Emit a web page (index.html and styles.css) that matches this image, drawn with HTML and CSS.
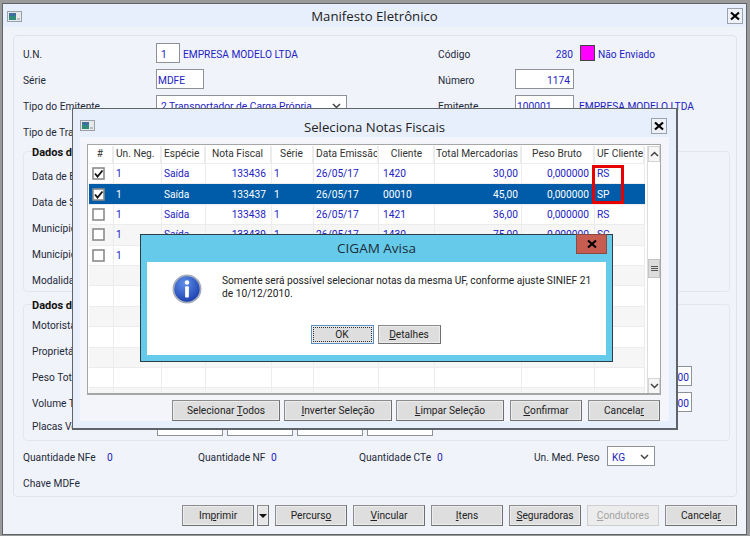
FILE: index.html
```html
<!DOCTYPE html>
<html lang="pt">
<head>
<meta charset="utf-8">
<title>Manifesto Eletrônico</title>
<link rel="stylesheet" href="styles.css">
</head>
<body>
<svg class="defs" width="0" height="0" aria-hidden="true">
  <symbol id="win" viewBox="0 0 15 11">
    <rect x="0.5" y="0.5" width="14" height="10" fill="#e8e8e8" stroke="#9aa0a8"/>
    <rect x="2" y="2" width="7" height="7" fill="#2f8a7a"/>
    <rect x="2" y="2" width="7" height="3" fill="#3f6f9f"/>
    <rect x="10" y="7" width="3" height="2" fill="#b8bcc4"/>
  </symbol>
  <symbol id="chk" viewBox="0 0 13 13">
    <rect x="1" y="1" width="11" height="11" fill="#fff" stroke="#8a8a8a" stroke-width="1.6"/>
    <path d="M3 6.5 L5.5 9.5 L10.5 3.5" fill="none" stroke="#111" stroke-width="1.8"/>
  </symbol>
  <symbol id="box" viewBox="0 0 13 13">
    <rect x="1" y="1" width="11" height="11" fill="#fff" stroke="#8a8a8a" stroke-width="1.6"/>
  </symbol>
  <symbol id="x" viewBox="0 0 12 10">
    <path d="M2 1.5 L10 8.5 M10 1.5 L2 8.5" stroke="#000" stroke-width="2.2" fill="none"/>
  </symbol>
  <symbol id="chev" viewBox="0 0 9 6">
    <path d="M1 1 L4.5 4.5 L8 1" fill="none" stroke="#444" stroke-width="1.5"/>
  </symbol>
</svg>

<main class="window">
  <header class="titlebar">
    <svg class="ticon"><use href="#win"/></svg>
    <h1 class="title">Manifesto Eletrônico</h1>
    <button class="closebtn"><svg class="xicon"><use href="#x"/></svg></button>
  </header>
  <div class="content">
    <section class="panel">
      <div class="row">
        <div class="half"><span class="lbl">U.N.</span><span class="field w24">1</span><span class="val ml3">EMPRESA MODELO LTDA</span></div>
        <div class="half"><span class="lbl2">Código</span><span class="val num">280</span><span class="swatch"></span><span class="val">Não Enviado</span></div>
      </div>
      <div class="row">
        <div class="half"><span class="lbl">Série</span><span class="field w48 tight">MDFE</span></div>
        <div class="half"><span class="lbl2">Número</span><span class="field w59 right">1174</span></div>
      </div>
      <div class="row">
        <div class="half"><span class="lbl">Tipo do Emitente</span><span class="field w191">2 Transportador de Carga Própria<svg class="chev"><use href="#chev"/></svg></span></div>
        <div class="half"><span class="lbl2">Emitente</span><span class="field w59 tight">100001</span><span class="val ml5">EMPRESA MODELO LTDA</span></div>
      </div>
      <div class="row"><div class="half"><span class="lbl">Tipo de Transportador</span></div></div>

      <section class="group g1">
        <div class="legend">Dados do Transporte</div>
        <div class="row"><span class="lbl">Data de Emissão</span></div>
        <div class="row"><span class="lbl">Data de Saída</span></div>
        <div class="row"><span class="lbl">Município Carregamento</span></div>
        <div class="row"><span class="lbl">Município Descarga</span></div>
        <div class="row"><span class="lbl">Modalidade</span></div>
      </section>

      <section class="group g2">
        <div class="legend">Dados do Veículo</div>
        <div class="row"><span class="lbl">Motorista</span></div>
        <div class="row"><span class="lbl">Proprietário</span></div>
        <div class="row spread"><span class="lbl">Peso Total</span><span class="field w23 right">000</span></div>
        <div class="row spread"><span class="lbl">Volume Total</span><span class="field w23 right">,00</span></div>
        <div class="row last"><span class="lbl lblp">Placas Veículos</span><span class="field plate"></span><span class="field plate"></span><span class="field plate"></span><span class="field plate"></span></div>
      </section>

      <div class="row qty">
        <span class="q1">Quantidade NFe</span><span class="val v1">0</span>
        <span class="q2">Quantidade NF</span><span class="val v2">0</span>
        <span class="q3">Quantidade CTe</span><span class="val v3">0</span>
        <span class="q4">Un. Med. Peso</span><span class="field w48">KG<svg class="chev"><use href="#chev"/></svg></span>
      </div>
      <div class="row"><span>Chave MDFe</span></div>
    </section>
    <footer class="actions">
      <button class="btn w72"><span>Im<u>p</u>rimir</span></button>
      <button class="btn drop"><span class="tri"></span></button>
      <button class="btn w72 gap6"><span>Percurs<u>o</u></span></button>
      <button class="btn w72"><span><u>V</u>incular</span></button>
      <button class="btn w72"><span><u>I</u>tens</span></button>
      <button class="btn w72"><span><u>S</u>eguradoras</span></button>
      <button class="btn w72 off"><span><u>C</u>ondutores</span></button>
      <button class="btn w72"><span>Cancela<u>r</u></span></button>
    </footer>
  </div>
</main>

<section class="dialog">
  <header class="titlebar dlgbar">
    <svg class="ticon"><use href="#win"/></svg>
    <h2 class="title">Seleciona Notas Fiscais</h2>
    <button class="closebtn"><svg class="xicon"><use href="#x"/></svg></button>
  </header>
  <div class="dlgbody">
    <div class="grid">
      <div class="rows">
        <div class="gr head"><span class="c">#</span><span>Un. Neg.</span><span>Espécie</span><span class="c">Nota Fiscal</span><span class="c">Série</span><span>Data Emissão</span><span class="c">Cliente</span><span class="c">Total Mercadorias</span><span class="c">Peso Bruto</span><span>UF Cliente</span></div>
        <div class="gr"><span class="c"><svg class="cb"><use href="#chk"/></svg></span><span>1</span><span>Saída</span><span class="r">133436</span><span>1</span><span>26/05/17</span><span>1420</span><span class="r">30,00</span><span class="r">0,000000</span><span>RS</span></div>
        <div class="gr sel"><span class="c"><svg class="cb"><use href="#chk"/></svg></span><span>1</span><span>Saída</span><span class="r">133437</span><span>1</span><span>26/05/17</span><span>00010</span><span class="r">45,00</span><span class="r">0,000000</span><span>SP</span></div>
        <div class="gr"><span class="c"><svg class="cb"><use href="#box"/></svg></span><span>1</span><span>Saída</span><span class="r">133438</span><span>1</span><span>26/05/17</span><span>1421</span><span class="r">36,00</span><span class="r">0,000000</span><span>RS</span></div>
        <div class="gr alt"><span class="c"><svg class="cb"><use href="#box"/></svg></span><span>1</span><span>Saída</span><span class="r">133439</span><span>1</span><span>26/05/17</span><span>1430</span><span class="r">75,00</span><span class="r">0,000000</span><span>SC</span></div>
        <div class="gr"><span class="c"><svg class="cb"><use href="#box"/></svg></span><span>1</span><span></span><span></span><span></span><span></span><span></span><span></span><span></span><span></span></div>
        <div class="gr alt"><i></i><i></i><i></i><i></i><i></i><i></i><i></i><i></i><i></i><i></i></div>
        <div class="gr"><i></i><i></i><i></i><i></i><i></i><i></i><i></i><i></i><i></i><i></i></div>
        <div class="gr alt"><i></i><i></i><i></i><i></i><i></i><i></i><i></i><i></i><i></i><i></i></div>
        <div class="gr"><i></i><i></i><i></i><i></i><i></i><i></i><i></i><i></i><i></i><i></i></div>
        <div class="gr alt"><i></i><i></i><i></i><i></i><i></i><i></i><i></i><i></i><i></i><i></i></div>
        <div class="gr"><i></i><i></i><i></i><i></i><i></i><i></i><i></i><i></i><i></i><i></i></div>
        <div class="gr alt stub"><i></i><i></i><i></i><i></i><i></i><i></i><i></i><i></i><i></i><i></i></div>
      </div>
      <div class="scroll">
        <span class="arrow up"><svg class="chev2"><use href="#chev"/></svg></span>
        <span class="thumb"><b></b><b></b><b></b></span>
        <span class="arrow"><svg class="chev2"><use href="#chev"/></svg></span>
      </div>
      <div class="redmark"></div>
    </div>
    <div class="dlgactions">
      <button class="btn w108"><span>Selecionar <u>T</u>odos</span></button>
      <button class="btn w108"><span><u>I</u>nverter Seleção</span></button>
      <button class="btn w108"><span><u>L</u>impar Seleção</span></button>
      <button class="btn w72 gap6b"><span><u>C</u>onfirmar</span></button>
      <button class="btn w72 gap6b"><span>Cancela<u>r</u></span></button>
    </div>
  </div>
</section>

<section class="alert">
  <header class="alertbar">
    <h2 class="alerttitle">CIGAM Avisa</h2>
    <button class="alertclose"><svg class="xicon"><use href="#x"/></svg></button>
  </header>
  <div class="alertbody">
    <div class="msg">
      <svg class="info" viewBox="0 0 32 32">
        <defs>
          <radialGradient id="ig" cx="0.4" cy="0.3" r="0.8"><stop offset="0" stop-color="#5f8fe8"/><stop offset="1" stop-color="#1234a8"/></radialGradient>
        </defs>
        <circle cx="16" cy="16" r="14.5" fill="url(#ig)" stroke="#a6adb8" stroke-width="2"/>
        <circle cx="16" cy="9" r="2.4" fill="#fff"/>
        <rect x="14" y="13" width="4" height="12" rx="1" fill="#fff"/>
      </svg>
      <p class="msgtext">Somente será possível selecionar notas da mesma UF, conforme ajuste SINIEF 21 de 10/12/2010.</p>
    </div>
    <div class="alertactions">
      <button class="btn ok"><span class="focus">OK</span></button>
      <button class="btn w63"><span><u>D</u>etalhes</span></button>
    </div>
  </div>
</section>
</body>
</html>
```
FILE: styles.css
```css
* { box-sizing: border-box; }
html, body { margin: 0; padding: 0; }
body {
  position: relative;
  width: 750px; height: 536px; overflow: hidden;
  background: #9a9a9a;
  font: 10.2px/13px Roboto, "Liberation Sans", sans-serif;
  color: #1e2a38;
}
.defs { position: absolute; }
h1, h2, p { margin: 0; font-weight: normal; }
button { font: inherit; color: inherit; padding: 0; margin: 0; }

.window {
  position: absolute; left: 2px; top: 3px; width: 745px; height: 532px;
  border: 1px solid #5f6468;
  background: #f1f3fa;
  display: flex; flex-direction: column;
}
.titlebar {
  height: 23px; flex: none; background: #e8effc; padding-top: 1px;
  display: flex; align-items: center; justify-content: center;
  position: relative;
}
.ticon { position: absolute; left: 4px; top: 7px; width: 15px; height: 11px; }
.title { font: 13.2px/18px "Open Sans", sans-serif; color: #222; }
.closebtn {
  position: absolute; right: 3px; top: 4px; width: 16px; height: 16px;
  background: #eef1f7; border: 1px solid #9aa2ac;
  display: flex; align-items: center; justify-content: center;
}
.xicon { width: 12px; height: 10px; display: block; }
.content { flex: 1; display: flex; flex-direction: column; padding: 8px 9px 0 10px; }

.panel {
  height: 462px; border: 1px solid #dfe4ec; border-radius: 4px;
  padding: 4px 6px 0 9px;
}
.row { display: flex; align-items: center; height: 26px; white-space: nowrap; }
.row span:not(.swatch) { padding-top: 2px; }
.half { display: flex; align-items: center; width: 415px; flex: none; }
.half + .half { width: auto; }
.lbl { width: 133px; flex: none; }
.lbl2 { width: 77px; flex: none; }
.val { color: #2222c4; }
.ml3 { margin-left: 3px; }
.ml5 { margin-left: 5px; }
.num { width: 58px; text-align: right; }
.swatch { width: 15px; height: 16px; background: #f0f; border: 1px solid #444; margin: 0 3px 0 7px; }

.field {
  height: 20px; background: #fff; border: 1px solid #8e9296;
  color: #2222c4; padding: 0 3px 0 4px; flex: none;
  display: flex; align-items: center; position: relative;
}
.w23 { width: 23px; padding-right: 2px; overflow: hidden; }
.w24 { width: 24px; }
.w48 { width: 48px; }
.w59 { width: 59px; }
.w191 { width: 191px; }
.tight { padding-left: 1px; }
.right { justify-content: flex-end; }
.chev { position: absolute; right: 5px; top: 7px; width: 9px; height: 6px; }

.group { border: 1px solid #e2e6ee; border-radius: 4px; padding: 0 0 0 8px; }
.legend { font-weight: bold; color: #111; height: 14px; margin: -7px 0 3px; padding-top: 1px; font-size: 11px; }
.group .lbl { width: 125px; }
.g1 { margin-top: 7px; height: 141px; }
.g2 { margin-top: 12px; height: 137px; }
.g2 .legend { margin-bottom: -1px; }
.spread { justify-content: space-between; padding-right: 37px; }
.last { height: 21px; gap: 4px; }
.lblp { margin-right: -4px; }
.plate { width: 66px; height: 21px; }

.qty { margin-top: 2px; }
.q1 { width: 84px; }
.v1 { width: 91px; }
.q2 { width: 73px; }
.v2 { width: 88px; }
.q3 { width: 78px; }
.v3 { width: 97px; }
.q4 { width: 73px; }

.actions { display: flex; padding: 8px 0 0 169px; gap: 6px; }
.btn {
  height: 21px; background: #dedede; flex: none;
  border: 1px solid #8c8c8c; border-right-color: #6f6f6f; border-bottom-color: #6f6f6f;
  box-shadow: inset 0 0 0 1px #ececec;
  display: flex; align-items: center; justify-content: center; color: #222;
}
.w72 { width: 72px; }
.w108 { width: 108px; }
.w63 { width: 63px; height: 19px; }
.drop { width: 12px; margin-left: -3px; background: #e6e6e6; }
.tri { width: 0; height: 0; border: 4px solid transparent; border-top: 4px solid #111; border-bottom: 0; }
.off { color: #a4a4a4; background: #ececec; border-color: #cfcfcf; }

.dialog {
  position: absolute; left: 72px; top: 108px; width: 606px; height: 322px;
  border: 1px solid #5f6468; border-bottom-width: 2px; border-right-width: 2px;
  background: #e8effc; display: flex; flex-direction: column;
}
.dlgbar { height: 28px; padding-top: 8px; }
.dlgbar .ticon { left: 7px; top: 11px; }
.dlgbar .closebtn { right: 9px; top: 9px; }
.dlgbody { flex: 1; margin: 0 7px 7px; background: #f3f5fb; padding: 7px 0 0 7px; display: flex; flex-direction: column; }
.grid { position: relative; width: 574px; height: 251px; border: 1px solid #a6a6a6; border-bottom-width: 2px; background: #fff; display: flex; overflow: hidden; padding: 1px 0 0 1px; }
.rows { width: 556px; flex: none; }
.gr {
  display: grid;
  grid-template-columns: 25px 48px 44px 66px 42px 65px 56px 87px 73px 50px;
  height: 20.4px; align-items: stretch; color: #2222c4;
  border-bottom: 1px solid #ececec; background: #fff;
}
.gr > * { display: flex; align-items: center; padding: 0 3px 0 2px; border-right: 1px solid #ececec; overflow: hidden; white-space: nowrap; }
.gr .c { justify-content: center; }
.gr .r { justify-content: flex-end; }
.gr .r:nth-child(4), .gr .r:nth-child(9) { padding-right: 5px; }
.gr > :nth-child(7) { padding-left: 4px; }
.alt { background: #f6f6f6; }
.head { height: 18px; color: #333; background: #fff; }
.head > * { border-right: 2px solid #ececec; padding-bottom: 2px; }
.sel { background: #005ca8; color: #fff; }
.sel > * { border-right-color: #005ca8; }
.cb { width: 13px; height: 13px; flex: none; margin-right: 4px; }
.stub { height: 8px; border: 0; }
.scroll { flex: 1; margin-left: 2px; background: #fff; border-left: 1px solid #dcdcdc; display: flex; flex-direction: column; }
.arrow { height: 16px; flex: none; display: flex; align-items: center; justify-content: center; background: #f6f6f6; border: 1px solid #d4d4d4; }
.chev2 { width: 9px; height: 6px; }
.up .chev2 { transform: scaleY(-1); }
.thumb { height: 19px; margin: 97px 0 100px; background: #dcdcdc; border: 1px solid #c4c4c4; display: flex; flex-direction: column; gap: 1px; align-items: center; justify-content: center; flex: none; }
.thumb b { width: 7px; height: 1px; background: #555; }
.redmark { position: absolute; left: 504px; top: 20px; width: 32px; height: 39px; border: 3px solid #e60000; }

.dlgactions { display: flex; padding: 5px 0 0 85px; gap: 4px; }
.gap6b { margin-left: 2px; }

.alert {
  position: absolute; left: 140px; top: 234px; width: 473px; height: 128px;
  background: #66cbea; border: 1px solid #2c3e46;
  display: flex; flex-direction: column;
}
.alertbar { height: 27px; flex: none; position: relative; display: flex; justify-content: center; align-items: center; padding-bottom: 2px; }
.alerttitle { font: 13.5px/18px "Open Sans", sans-serif; color: #1c2c38; }
.alertclose { position: absolute; right: 5px; top: -1px; width: 31px; height: 20px; background: #c75c50; border: 1px solid #8a4a44; display: flex; align-items: center; justify-content: center; }
.alertbody { flex: 1; margin: 0 6px 6px; background: #fff; display: flex; flex-direction: column; }
.msg { display: flex; height: 63px; padding: 12px 0 0 25px; }
.info { width: 30px; height: 30px; flex: none; }
.msgtext { margin: 0 0 0 20px; width: 372px; color: #222; }
.alertactions { display: flex; justify-content: center; gap: 4px; padding-right: 2px; }
.ok { width: 63px; height: 19px; border: 1px solid #5a8fc0; }
.focus { width: 57px; height: 13px; display: flex; align-items: center; justify-content: center; outline: 1px dotted #333; }
```
